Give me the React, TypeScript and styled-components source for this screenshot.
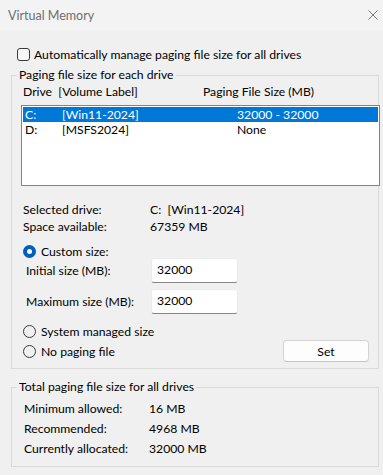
import styled, { createGlobalStyle } from 'styled-components';

const GlobalStyle = createGlobalStyle`
  html, body {
    margin: 0;
    padding: 0;
    background: #f0f0f0;
  }
  body {
    font-family: Lato, "Noto Sans", sans-serif;
    font-size: 12.2px;
    color: #000;
  }
`;

const Window = styled.div`
  width: 383px;
  height: 475px;
  overflow: hidden;
  display: flex;
  flex-direction: column;
  background: #f0f0f0;
`;

const TitleBar = styled.div`
  height: 30px;
  flex-shrink: 0;
  display: flex;
  align-items: center;
  justify-content: space-between;
  padding: 0 5px 0 8px;
  background: #f3f3f3;
  color: #6f6f6f;
  font-size: 12.5px;
`;

const CloseBtn = styled.span`
  display: flex;
  width: 10px;
  height: 10px;
  color: #7a7a7a;
`;

const Body = styled.div`
  display: flex;
  flex-direction: column;
  padding: 0 4px 0 11px;
`;

const CheckRow = styled.label`
  display: flex;
  align-items: center;
  gap: 4px;
  height: 16px;
  margin: 16px 0 5px 6px;
`;

const CheckBox = styled.span`
  width: 11px;
  height: 11px;
  border: 1px solid #3a3a3a;
  border-radius: 3px;
  background: #f7f7f7;
`;

const Group = styled.fieldset`
  margin: 0;
  border: 1px solid #dadada;
  padding: 1px 0 6px 9px;
  min-width: 0;
`;

const Legend = styled.legend`
  margin-left: -4px;
  padding: 0 2px;
  line-height: 16px;
`;

const Header = styled.div`
  display: grid;
  grid-template-columns: 180px 1fr;
  line-height: 16px;
  padding-left: 2px;
  margin-bottom: 5px;
`;

const ListBox = styled.div`
  height: 77px;
  margin-right: -2px;
  border: 1px solid #838383;
  background: #fff;
  padding: 1px;
`;

const ListRow = styled.div<{ $selected?: boolean }>`
  display: grid;
  grid-template-columns: 37px 175px 1fr;
  height: 15px;
  line-height: 15px;
  padding-left: 2px;
  background: ${(p) => (p.$selected ? '#0078d7' : 'transparent')};
  color: ${(p) => (p.$selected ? '#fff' : '#000')};
`;

const InfoGrid = styled.div<{ $labelWidth: number; $rowHeight: number }>`
  display: grid;
  grid-template-columns: ${(p) => p.$labelWidth}px 1fr;
  grid-auto-rows: ${(p) => p.$rowHeight}px;
  align-items: center;
`;

const DriveInfo = styled(InfoGrid)`
  margin: 15px 0 8px 2px;
`;

const RadioRow = styled.label`
  display: flex;
  align-items: center;
  gap: 5px;
  height: 16px;
  padding-left: 2px;
`;

const Radio = styled.span<{ $checked?: boolean }>`
  box-sizing: border-box;
  width: 13px;
  height: 13px;
  border-radius: 50%;
  border: ${(p) => (p.$checked ? '4px solid #005fb8' : '1px solid #3a3a3a')};
  background: ${(p) => (p.$checked ? '#fff' : 'transparent')};
`;

const SizeFields = styled.div`
  display: flex;
  flex-direction: column;
  gap: 6px;
  margin: -1px 0 9px;
`;

const SizeRow = styled.div`
  display: grid;
  grid-template-columns: 125px 87px;
  align-items: center;
  padding-left: 5px;
`;

const SizeInput = styled.div`
  box-sizing: border-box;
  height: 25px;
  padding: 0 5px 3px;
  display: flex;
  align-items: center;
  background: #fff;
  border: 1px solid #ececec;
  border-bottom: 1px solid #868686;
  border-radius: 3px;
`;

const RadioStack = styled.div`
  display: flex;
  flex-direction: column;
  gap: 1px;
`;

const BottomRow = styled.div`
  display: flex;
  align-items: center;
  justify-content: space-between;
  padding-right: 9px;
`;

const Button = styled.button`
  box-sizing: border-box;
  width: 86px;
  height: 22px;
  font: inherit;
  color: #000;
  background: #fdfdfd;
  border: 1px solid #d3d3d3;
  border-bottom-color: #c4c4c4;
  border-radius: 4px;
`;

const TotalGroup = styled(Group)`
  margin-top: 10px;
  padding-bottom: 8px;
`;

const TotalInfo = styled(InfoGrid)`
  margin: 2px 0 0 3px;
`;

export default function App() {
  return (
    <>
      <GlobalStyle />
      <Window>
        <TitleBar>
          <span>Virtual Memory</span>
          <CloseBtn>
            <svg width="10" height="10" viewBox="0 0 10 10">
              <path d="M0.5 0.5 L9.5 9.5 M9.5 0.5 L0.5 9.5" stroke="currentColor" strokeWidth="1" />
            </svg>
          </CloseBtn>
        </TitleBar>
        <Body>
          <CheckRow>
            <CheckBox />
            Automatically manage paging file size for all drives
          </CheckRow>
          <Group>
            <Legend>Paging file size for each drive</Legend>
            <Header>
              <span>Drive&nbsp; [Volume Label]</span>
              <span>Paging File Size (MB)</span>
            </Header>
            <ListBox>
              <ListRow $selected>
                <span>C:</span>
                <span>[Win11-2024]</span>
                <span>32000 - 32000</span>
              </ListRow>
              <ListRow>
                <span>D:</span>
                <span>[MSFS2024]</span>
                <span>None</span>
              </ListRow>
            </ListBox>
            <DriveInfo $labelWidth={127} $rowHeight={17}>
              <span>Selected drive:</span>
              <span>C:&nbsp; [Win11-2024]</span>
              <span>Space available:</span>
              <span>67359 MB</span>
            </DriveInfo>
            <RadioRow>
              <Radio $checked />
              Custom size:
            </RadioRow>
            <SizeFields>
              <SizeRow>
                <span>Initial size (MB):</span>
                <SizeInput>32000</SizeInput>
              </SizeRow>
              <SizeRow>
                <span>Maximum size (MB):</span>
                <SizeInput>32000</SizeInput>
              </SizeRow>
            </SizeFields>
            <RadioStack>
              <RadioRow>
                <Radio />
                System managed size
              </RadioRow>
              <BottomRow>
                <RadioRow>
                  <Radio />
                  No paging file
                </RadioRow>
                <Button>Set</Button>
              </BottomRow>
            </RadioStack>
          </Group>
          <TotalGroup>
            <Legend>Total paging file size for all drives</Legend>
            <TotalInfo $labelWidth={125} $rowHeight={20}>
              <span>Minimum allowed:</span>
              <span>16 MB</span>
              <span>Recommended:</span>
              <span>4968 MB</span>
              <span>Currently allocated:</span>
              <span>32000 MB</span>
            </TotalInfo>
          </TotalGroup>
        </Body>
      </Window>
    </>
  );
}
